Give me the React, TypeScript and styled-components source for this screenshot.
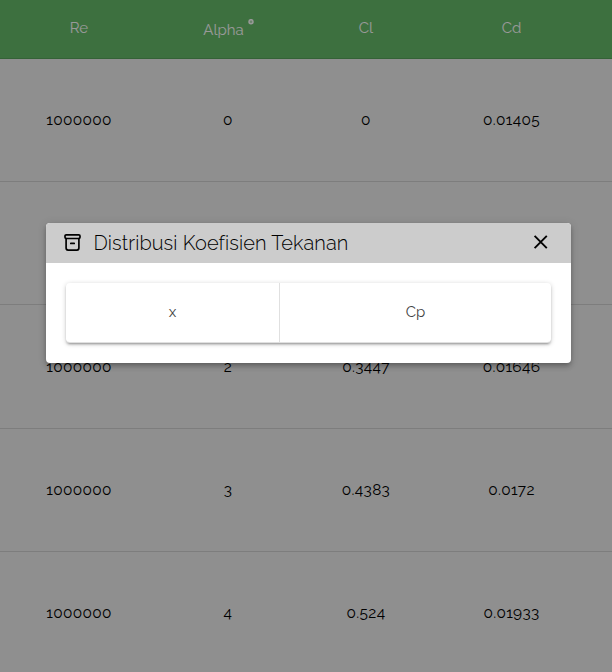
import React from 'react';
import styled, { createGlobalStyle } from 'styled-components';

const GlobalStyle = createGlobalStyle`
  * { box-sizing: border-box; }
  html, body { margin: 0; height: 100%; overflow: hidden; }
  body {
    font-family: Raleway, Lato, sans-serif;
    font-size: 15px;
    background: #eee;
  }
`;

const Page = styled.main`
  height: 672px;
  width: 612px;
  overflow: hidden;
  position: relative;
`;

const Row = styled.div<{ $head?: boolean }>`
  display: grid;
  grid-template-columns: 158px 140px 136px 155px 1fr;
  align-items: center;
  height: ${p => (p.$head ? '59px' : '123.2px')};
  padding: ${p => (p.$head ? '0 0 3px' : '0.5px 0 0')};
  border-bottom: 1px solid rgba(0, 0, 0, 0.12);
  background: ${p => (p.$head ? '#66bb6a' : 'transparent')};
  color: ${p => (p.$head ? '#fff' : '#000')};
`;

const Cell = styled.div`
  text-align: center;
  line-height: 20px;
`;

const Figure = styled(Cell)`
  font-size: 15.4px;
  letter-spacing: 0.35px;
`;

const AlphaCell = styled(Cell)`
  display: flex;
  justify-content: center;
  gap: 4px;
  padding: 4px 0 0 1px;
`;

const Degree = styled.svg`
  width: 6px;
  height: 6px;
  margin-top: -1px;
`;

const Backdrop = styled.div`
  position: absolute;
  inset: 0;
  background: rgba(0, 0, 0, 0.4);
  display: flex;
  justify-content: center;
  align-items: flex-start;
  padding: 223px 41px 0 46px;
`;

const Dialog = styled.section`
  width: 100%;
  height: 140px;
  background: #fff;
  border-radius: 4px;
  overflow: hidden;
  box-shadow: 0 2px 4px -1px rgba(0, 0, 0, 0.2), 0 4px 5px rgba(0, 0, 0, 0.14), 0 1px 10px rgba(0, 0, 0, 0.12);
`;

const DialogHeader = styled.header`
  display: flex;
  align-items: center;
  height: 40px;
  background: #ccc;
  padding: 0 18.5px 0 16px;
`;

const ArchiveIcon = styled.svg`
  width: 20px;
  height: 20px;
  fill: none;
  stroke: #000;
  stroke-width: 1.7;
  stroke-linecap: round;
`;

const Title = styled.h1`
  flex: 1;
  margin: 0 0 0 11.5px;
  font-size: 20px;
  font-weight: 300;
  line-height: 40px;
  letter-spacing: 0.1px;
  color: #000;
  white-space: nowrap;
`;

const CloseButton = styled.button`
  display: flex;
  padding: 0;
  border: 0;
  background: none;
  color: #000;
  margin-top: -2px;
`;

const CloseIcon = styled.svg`
  width: 24px;
  height: 24px;
  fill: none;
  stroke: currentColor;
  stroke-width: 1.9;
`;

const Card = styled.div`
  display: grid;
  grid-template-columns: 214px 1fr;
  height: 60px;
  margin: 20px 20px 0;
  border-radius: 4px;
  box-shadow: 0 1px 5px rgba(0, 0, 0, 0.2), 0 2px 2px rgba(0, 0, 0, 0.14), 0 3px 1px -2px rgba(0, 0, 0, 0.12);
`;

const CardCell = styled.div<{ $divided?: boolean }>`
  display: flex;
  align-items: center;
  justify-content: center;
  padding-bottom: 2px;
  color: #444;
  border-bottom: 1px solid rgba(0, 0, 0, 0.12);
  border-right: ${p => (p.$divided ? '1px solid rgba(0, 0, 0, 0.12)' : '0')};
  border-radius: ${p => (p.$divided ? '0 0 0 4px' : '0 0 4px 0')};
`;

const rows = [
  ['1000000', '0', '0', '0.01405'],
  ['', '', '', ''],
  ['1000000', '2', '0.3447', '0.01646'],
  ['1000000', '3', '0.4383', '0.0172'],
  ['1000000', '4', '0.524', '0.01933'],
];

export default function App() {
  return (
    <Page>
      <GlobalStyle />
      <Row $head>
        <Cell>Re</Cell>
        <AlphaCell>
          Alpha
          <Degree viewBox="0 0 6 6">
            <circle cx="3" cy="2.7" r="2" fill="currentColor" fillOpacity="0.5" stroke="currentColor" strokeWidth="1.5" />
          </Degree>
        </AlphaCell>
        <Cell>Cl</Cell>
        <Cell>Cd</Cell>
      </Row>
      {rows.map((row, index) => (
        <Row key={index}>
          {row.map((value, i) => (
            <Figure key={i}>{value}</Figure>
          ))}
        </Row>
      ))}
      <Backdrop>
        <Dialog role="dialog" aria-label="Distribusi Koefisien Tekanan">
          <DialogHeader>
            <ArchiveIcon viewBox="0 0 20 20">
              <rect x="3" y="1.8" width="15" height="3.7" rx="1.2" />
              <path d="M4.1 5.5V15.1a2 2 0 0 0 2 2H14.9a2 2 0 0 0 2-2V5.5M8.8 10.4H12.2" />
            </ArchiveIcon>
            <Title>Distribusi Koefisien Tekanan</Title>
            <CloseButton aria-label="Tutup">
              <CloseIcon viewBox="0 0 24 24">
                <path d="M5.6 5.9 17.8 18.1M17.8 5.9 5.6 18.1" />
              </CloseIcon>
            </CloseButton>
          </DialogHeader>
          <Card>
            <CardCell $divided>x</CardCell>
            <CardCell>Cp</CardCell>
          </Card>
        </Dialog>
      </Backdrop>
    </Page>
  );
}
